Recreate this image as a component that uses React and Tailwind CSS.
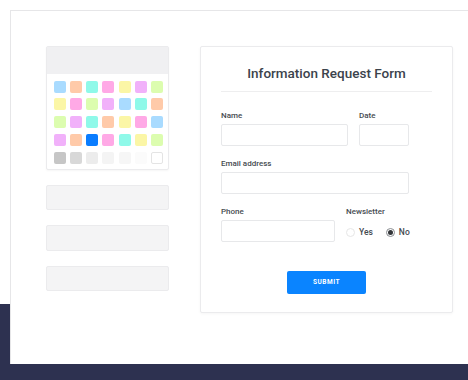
const B = '#a9dbff';
const P = '#ffcaa9';
const C = '#8ff9e9';
const K = '#ffa9e6';
const Y = '#fbf6a6';
const V = '#f1b1fa';
const L = '#dcfdaf';

const swatchRows = [
  [B, P, C, K, Y, V, L],
  [Y, K, L, V, B, C, P],
  [L, V, C, P, Y, K, B],
  [V, P, '#0a7dff', K, C, Y, L],
  ['#c6c6c6', '#d8d8d8', '#ececec', '#f4f4f4', '#f6f6f6', '#fbfbfb', '#ffffff'],
];

const Field = ({ label, className }) => (
  <div className={className}>
    <div className="h-[10px] text-[8px] leading-[10px] font-medium text-[#464b51]">{label}</div>
    <div className="mt-[2.5px] h-[22.5px] rounded-[2px] border border-[#e7e8ea] bg-white" />
  </div>
);

const Radio = ({ label, checked }) => (
  <div className="flex items-center gap-[4px]">
    <span className={`flex h-[9px] w-[9px] items-center justify-center rounded-full border ${checked ? 'border-[#8a8d91] bg-white' : 'border-[#e6e6e6] bg-white'}`}>
      {checked && <span className="h-[5px] w-[5px] rounded-full bg-[#333639]" />}
    </span>
    <span className="text-[8.5px] font-medium text-[#464b51]">{label}</span>
  </div>
);

const App = () => {
  return (
    <div
      className="w-[468px] h-[380px] overflow-hidden bg-[linear-gradient(to_bottom,#ffffff_304px,#2d3150_304px)]"
      style={{ fontFamily: 'Roboto, "Liberation Sans", sans-serif' }}
    >
      <div className="ml-[10px] mt-[10px] h-[354px] border-t border-l border-[#e6e6e8] bg-white pl-[35px] pt-[35px] flex gap-[31px]">
        {/* left column */}
        <div className="w-[123px] flex flex-col">
          <div className="h-[124px] rounded-[2px] border border-[#ebebed] bg-white shadow-[0_1px_2px_rgba(0,0,0,0.04)]">
            <div className="h-[27px] bg-[#f0f0f2]" />
            <div className="grid grid-cols-7 gap-x-[4.3px] gap-y-[5.8px] pl-[6.5px] pt-[6.5px] w-[116px]">
              {swatchRows.flat().map((c, i) => (
                <div
                  key={i}
                  className={`h-[12px] w-[12px] rounded-[2px] ${i === 34 ? 'border border-[#e4e4e4]' : ''}`}
                  style={{ backgroundColor: c }}
                />
              ))}
            </div>
          </div>
          <div className="mt-[15px] flex flex-col gap-[15px]">
            <div className="h-[25px] rounded-[2px] border border-[#ebebed] bg-[#f4f4f5]" />
            <div className="h-[26px] rounded-[2px] border border-[#ebebed] bg-[#f4f4f5]" />
            <div className="h-[25px] rounded-[2px] border border-[#ebebed] bg-[#f4f4f5]" />
          </div>
        </div>

        {/* form card */}
        <div className="w-[253px] h-[267px] rounded-[2px] border border-[#ebebed] bg-white px-[20px] pt-[16px] shadow-[0_1px_3px_rgba(0,0,0,0.04)]">
          <div className="h-[20px] text-center text-[13.5px] leading-[20px] font-medium text-[#3b434c]">
            Information Request Form
          </div>
          <div className="mt-[8px] h-px bg-[#eeeeef]" />
          <div className="mt-[19px] flex gap-[11px]">
            <Field label="Name" className="w-[127px]" />
            <Field label="Date" className="w-[50px]" />
          </div>
          <Field label="Email address" className="mt-[13px] w-[188px]" />
          <div className="mt-[13px] flex gap-[11px]">
            <Field label="Phone" className="w-[114px]" />
            <div>
              <div className="h-[10px] text-[8px] leading-[10px] font-medium text-[#464b51]">Newsletter</div>
              <div className="mt-[9px] flex gap-[13px]">
                <Radio label="Yes" />
                <Radio label="No" checked />
              </div>
            </div>
          </div>
          <div className="mt-[29px] flex justify-center">
            <div className="flex h-[23px] w-[79px] items-center justify-center rounded-[2px] bg-[#0a84ff] text-[6.5px] font-bold tracking-[0.08em] text-white">
              SUBMIT
            </div>
          </div>
        </div>
      </div>
    </div>
  );
};

export default App;
